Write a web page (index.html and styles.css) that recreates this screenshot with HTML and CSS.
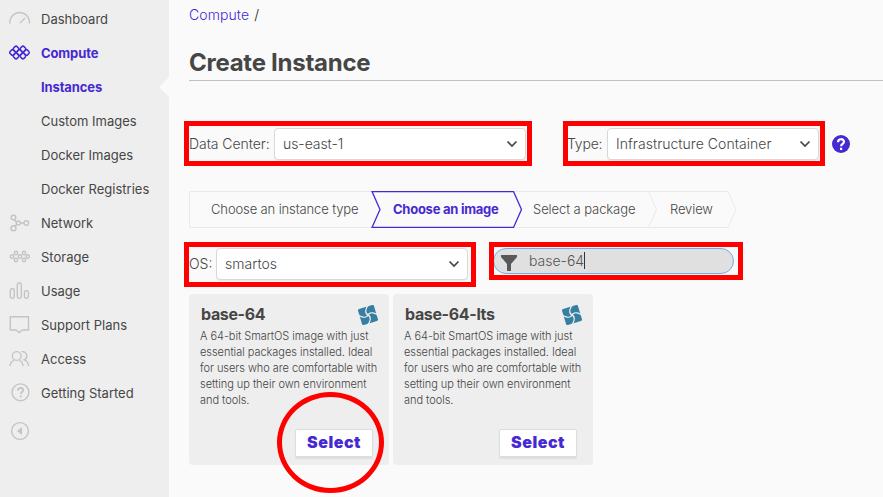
FILE: index.html
```html
<!DOCTYPE html>
<html lang="en">
<head>
<meta charset="utf-8">
<title>Create Instance</title>
<link rel="stylesheet" href="styles.css">
</head>
<body>
<aside class="sidebar">
  <a class="item"><svg class="icon" viewBox="0 0 22 20"><path d="M.8 14.500C.8-.2 20.600-.2 20.600 14.500M11 14l5-5"/></svg><span>Dashboard</span></a>
  <a class="item active"><svg class="icon" viewBox="0 0 22 20"><g transform="translate(10.500 9.500) rotate(45)"><rect x="-2.450" y="-2.450" width="4.900" height="4.900" rx="1.500"/><rect x="2.450" y="-7.350" width="4.900" height="4.900" rx="1.500"/><rect x="-7.350" y="2.450" width="4.900" height="4.900" rx="1.500"/><rect x="-7.350" y="-2.450" width="4.900" height="4.900" rx="1.500"/><rect x="-2.450" y="-7.350" width="4.900" height="4.900" rx="1.500"/><rect x="-2.450" y="2.450" width="4.900" height="4.900" rx="1.500"/><rect x="2.450" y="-2.450" width="4.900" height="4.900" rx="1.500"/></g></svg><span>Compute</span></a>
  <a class="item sub active current"><span>Instances</span></a>
  <a class="item sub"><span>Custom Images</span></a>
  <a class="item sub"><span>Docker Images</span></a>
  <a class="item sub"><span>Docker Registries</span></a>
  <a class="item"><svg class="icon" viewBox="0 0 22 20"><circle cx="4.500" cy="4.500" r="2.300"/><circle cx="4.500" cy="15.200" r="2.500"/><circle cx="9.300" cy="10" r="2"/><circle cx="17.300" cy="10" r="2.300"/><path d="M5.200 7l2 2M6 13.100l2-1.800M11.300 10H15"/></svg><span>Network</span></a>
  <a class="item"><svg class="icon" viewBox="0 0 22 20"><circle cx="3" cy="9.500" r="1.700"/><circle cx="7" cy="6" r="1.700"/><circle cx="11" cy="9.500" r="1.700"/><circle cx="7" cy="13" r="1.700"/><circle cx="15" cy="6" r="1.700"/><circle cx="15" cy="13" r="1.700"/><circle cx="18.700" cy="9.500" r="1.700"/></svg><span>Storage</span></a>
  <a class="item"><svg class="icon" viewBox="0 0 22 20"><rect x="1.300" y="7.700" width="4" height="9.500" rx="1.700"/><rect x="8.300" y="2" width="4" height="15.200" rx="1.700"/><rect x="15.400" y="9.700" width="4" height="7.500" rx="1.700"/></svg><span>Usage</span></a>
  <a class="item"><svg class="icon" viewBox="0 0 22 20"><path d="M1.300 1.700h18.200v13.300h-6l-3.200 2.500L7.100 15H1.300z"/></svg><span>Support Plans</span></a>
  <a class="item"><svg class="icon" viewBox="0 0 22 20"><circle cx="7.700" cy="7" r="4.400"/><path d="M1 17c.3-3.300 2-4.900 4-5.600M14 17c-.3-3.300-1.700-4.900-3.700-5.600M12.500 2.900c3-1 5.300 1.100 5.300 4 0 2-1 3.500-2.700 4 2.800 1 4.300 3 4.500 6.100"/></svg><span>Access</span></a>
  <a class="item"><svg class="icon" viewBox="0 0 22 20"><circle cx="11.500" cy="9.300" r="8.400"/><path class="mark" d="M9 7.500c0-3.500 5.200-3.400 5.200-.4 0 1.800-2.500 1.900-2.500 4M11.700 12.500v1.800"/></svg><span>Getting Started</span></a>
  <a class="item collapse"><svg class="icon" viewBox="0 0 22 20"><circle cx="11" cy="10" r="8.400"/><path class="solid" d="M13 6v8l-5-4z"/></svg></a>
</aside>
<main class="main">
  <nav class="crumbs"><a>Compute</a><span>/</span></nav>
  <h1><span>Create Instance</span></h1>
  <div class="row settings">
    <div class="field dc"><label>Data Center:</label><div class="select">us-east-1<svg viewBox="0 0 12 8"><path d="M1.500 1.500L6 6l4.500-4.500"/></svg></div><i class="box"></i></div>
    <div class="field type"><label>Type:</label><div class="select">Infrastructure Container<svg viewBox="0 0 12 8"><path d="M1.500 1.500L6 6l4.500-4.500"/></svg></div><i class="box"></i></div>
    <svg class="help" viewBox="0 0 18 18"><circle cx="9" cy="9" r="9"/><path d="M6 7.200c.1-4 6-3.800 6-.4 0 2.200-2.900 2-2.900 4.500M9.100 12.800v2.200"/></svg>
  </div>
  <div class="steps">
    <svg class="outline" viewBox="0 0 549 37"><path d="M182 .5H.5v36H182M325 .5h134.500l8 18-8 18H325M459.500.5H539l8 18-8 18h-79.500"/><path class="on" d="M183 .5h141.500l8 18-8 18H183l8-18z"/></svg>
    <span class="s1">Choose an instance type</span><span class="s2">Choose an image</span><span class="s3">Select a package</span><span class="s4">Review</span>
  </div>
  <div class="row filters">
    <div class="field os"><label>OS:</label><div class="select">smartos<svg viewBox="0 0 12 8"><path d="M1.500 1.500L6 6l4.500-4.500"/></svg></div><i class="box"></i></div>
    <div class="search"><svg viewBox="0 0 16 16"><path d="M0 0h16v2L10 9v7H6V9L0 2z"/></svg><span>base-64</span><b class="caret"></b><i class="box"></i></div>
  </div>
  <div class="cards">
    <article class="card">
      <header><h2>base-64</h2><svg class="logo" viewBox="0 0 20 20"><g id="pinwheel" transform="rotate(-17 10 10)"><rect x="1.700" y="1.700" width="16.600" height="16.600" rx="1.500"/><g class="slits"><path id="slit" d="M10.500 10.500Q7.500 8 9.500 4.500T14 .5"/><use href="#slit" transform="rotate(90 10 10)"/><use href="#slit" transform="rotate(180 10 10)"/><use href="#slit" transform="rotate(270 10 10)"/></g></g></svg></header>
      <p>A 64-bit SmartOS image with just<br>essential packages installed. Ideal<br>for users who are comfortable with<br>setting up their own environment<br>and tools.</p>
      <button>Select</button><i class="ring"></i>
    </article>
    <article class="card">
      <header><h2>base-64-lts</h2><svg class="logo" viewBox="0 0 20 20"><use href="#pinwheel"/></svg></header>
      <p>A 64-bit SmartOS image with just<br>essential packages installed. Ideal<br>for users who are comfortable with<br>setting up their own environment<br>and tools.</p>
      <button>Select</button>
    </article>
  </div>
</main>
</body>
</html>
```
FILE: styles.css
```css
* { box-sizing: border-box; }
body { margin: 0; display: flex; width: 883px; height: 497px; overflow: hidden; background: #fafafa; color: #464646; font: 13px/18px Inter, "Liberation Sans", sans-serif; white-space: nowrap; }
.sidebar { width: 169px; height: 497px; flex: none; background: #eee; padding-top: 2px; }
.item { display: flex; align-items: center; height: 34px; padding-left: 9px; gap: 10px; position: relative; }
.item.sub { padding-left: 41px; }
.item.active { color: #4629d2; font-weight: 700; letter-spacing: -.12px; }
.item.current::after { content: ""; position: absolute; right: 0; top: 7px; border: 10px solid transparent; border-right-color: #fafafa; border-left: 0; }
.collapse { margin-top: 4px; }
.icon { width: 22px; height: 20px; fill: none; stroke: #c4c4c4; stroke-width: 1.4; }
.icon .solid { fill: #c4c4c4; stroke: none; }
.icon .mark { stroke-width: 1.9; }
.active .icon { stroke: #4629d2; stroke-width: 1.5; }
.main { flex: 1; padding-left: 20px; }
.crumbs { display: flex; gap: 5px; height: 30px; align-items: center; font-size: 14px; font-weight: 300; color: #222; letter-spacing: .08px; }
.crumbs a { color: #4629d2; }
h1 { margin: 0; height: 51px; padding-top: 18px; border-bottom: 1px solid #c0c0c0; font-size: 24px; line-height: 30px; letter-spacing: -.26px; }
.row { display: flex; font-size: 14px; font-weight: 300; }
.settings { margin-top: 47px; height: 32px; align-items: center; letter-spacing: -.06px; }
.field { display: flex; align-items: center; justify-content: space-between; height: 32px; position: relative; }
.dc { width: 337px; }
.type { width: 251px; margin-left: 42px; letter-spacing: .04px; }
.type label { margin-left: -1px; letter-spacing: -.2px; }
.os { width: 279px; }
.select { display: flex; align-items: center; justify-content: space-between; width: 252px; height: 32px; padding: 0 7px 0 8px; background: #fff; border: 1px solid #d8d8d8; border-radius: 4px; box-shadow: 0 1px 1px #0001; }
.type .select { width: 212px; }
.select svg { width: 12px; height: 8px; fill: none; stroke: #464646; stroke-width: 1.7; }
.box { position: absolute; border: 5px solid red; inset: -7px -6px -6px -5px; }
.os .box { inset: -6px -8px -7px -5px; }
.help { width: 18px; height: 18px; margin-left: 13px; fill: #4629d2; }
.help path { fill: none; stroke: #fff; stroke-width: 2.2; }
.steps { position: relative; display: flex; height: 37px; width: 549px; margin-top: 31px; align-items: center; font-weight: 300; letter-spacing: -.12px; }
.outline { position: absolute; inset: 0; width: 549px; height: 37px; fill: none; stroke: #eaeaea; }
.outline .on { stroke: #4629d2; stroke-width: 1.3; }
.steps span { position: relative; top: -1px; }
.s1 { width: 182px; margin-left: 22px; }
.s2 { width: 140px; font-weight: 700; color: #4629d2; letter-spacing: -.26px; }
.s3 { width: 137px; letter-spacing: -.08px; }
.filters { margin-top: 20px; height: 32px; }
.search { position: relative; display: flex; align-items: center; width: 241px; height: 26px; margin-left: 25px; padding-left: 7px; border: 1px solid #6caee6; border-radius: 13px; background: #e0e0e0; color: #555; }
.search > svg { width: 16px; height: 16px; margin: 4px 12px 0 0; fill: #595959; }
.caret { width: 1px; height: 17px; margin-top: -2px; background: #333; }
.search .box { inset: -7px -10px -7px -5px; }
.cards { display: flex; gap: 4px; margin-top: 14px; }
.card { position: relative; width: 200px; height: 171px; padding: 11px 16px 8px 11px; border-radius: 4px; background: #eee; display: flex; flex-direction: column; }
.card header { display: flex; justify-content: space-between; height: 23px; margin: 0 -5px 0 1px; }
h2 { margin: 0; font-size: 16px; line-height: 19px; letter-spacing: -.35px; }
.logo { width: 20px; height: 20px; fill: #377fa2; }
.slits { fill: none; stroke: #eee; stroke-width: 1.2; }
.card p { margin: 0; font-size: 11px; line-height: 16px; letter-spacing: -.04px; font-weight: 300; color: #444; }
.card button { margin: auto 0 0 auto; width: 78px; height: 28px; padding: 0 0 2px; border: 1px solid #ddd; border-radius: 2px; background: #fff; box-shadow: 0 2px 1px #0001; color: #4629d2; font: 900 16px/24px Inter, sans-serif; letter-spacing: .5px; }
.ring { position: absolute; left: 88px; top: 98px; width: 107px; height: 101px; border: 5px solid red; border-radius: 50%; }
```
